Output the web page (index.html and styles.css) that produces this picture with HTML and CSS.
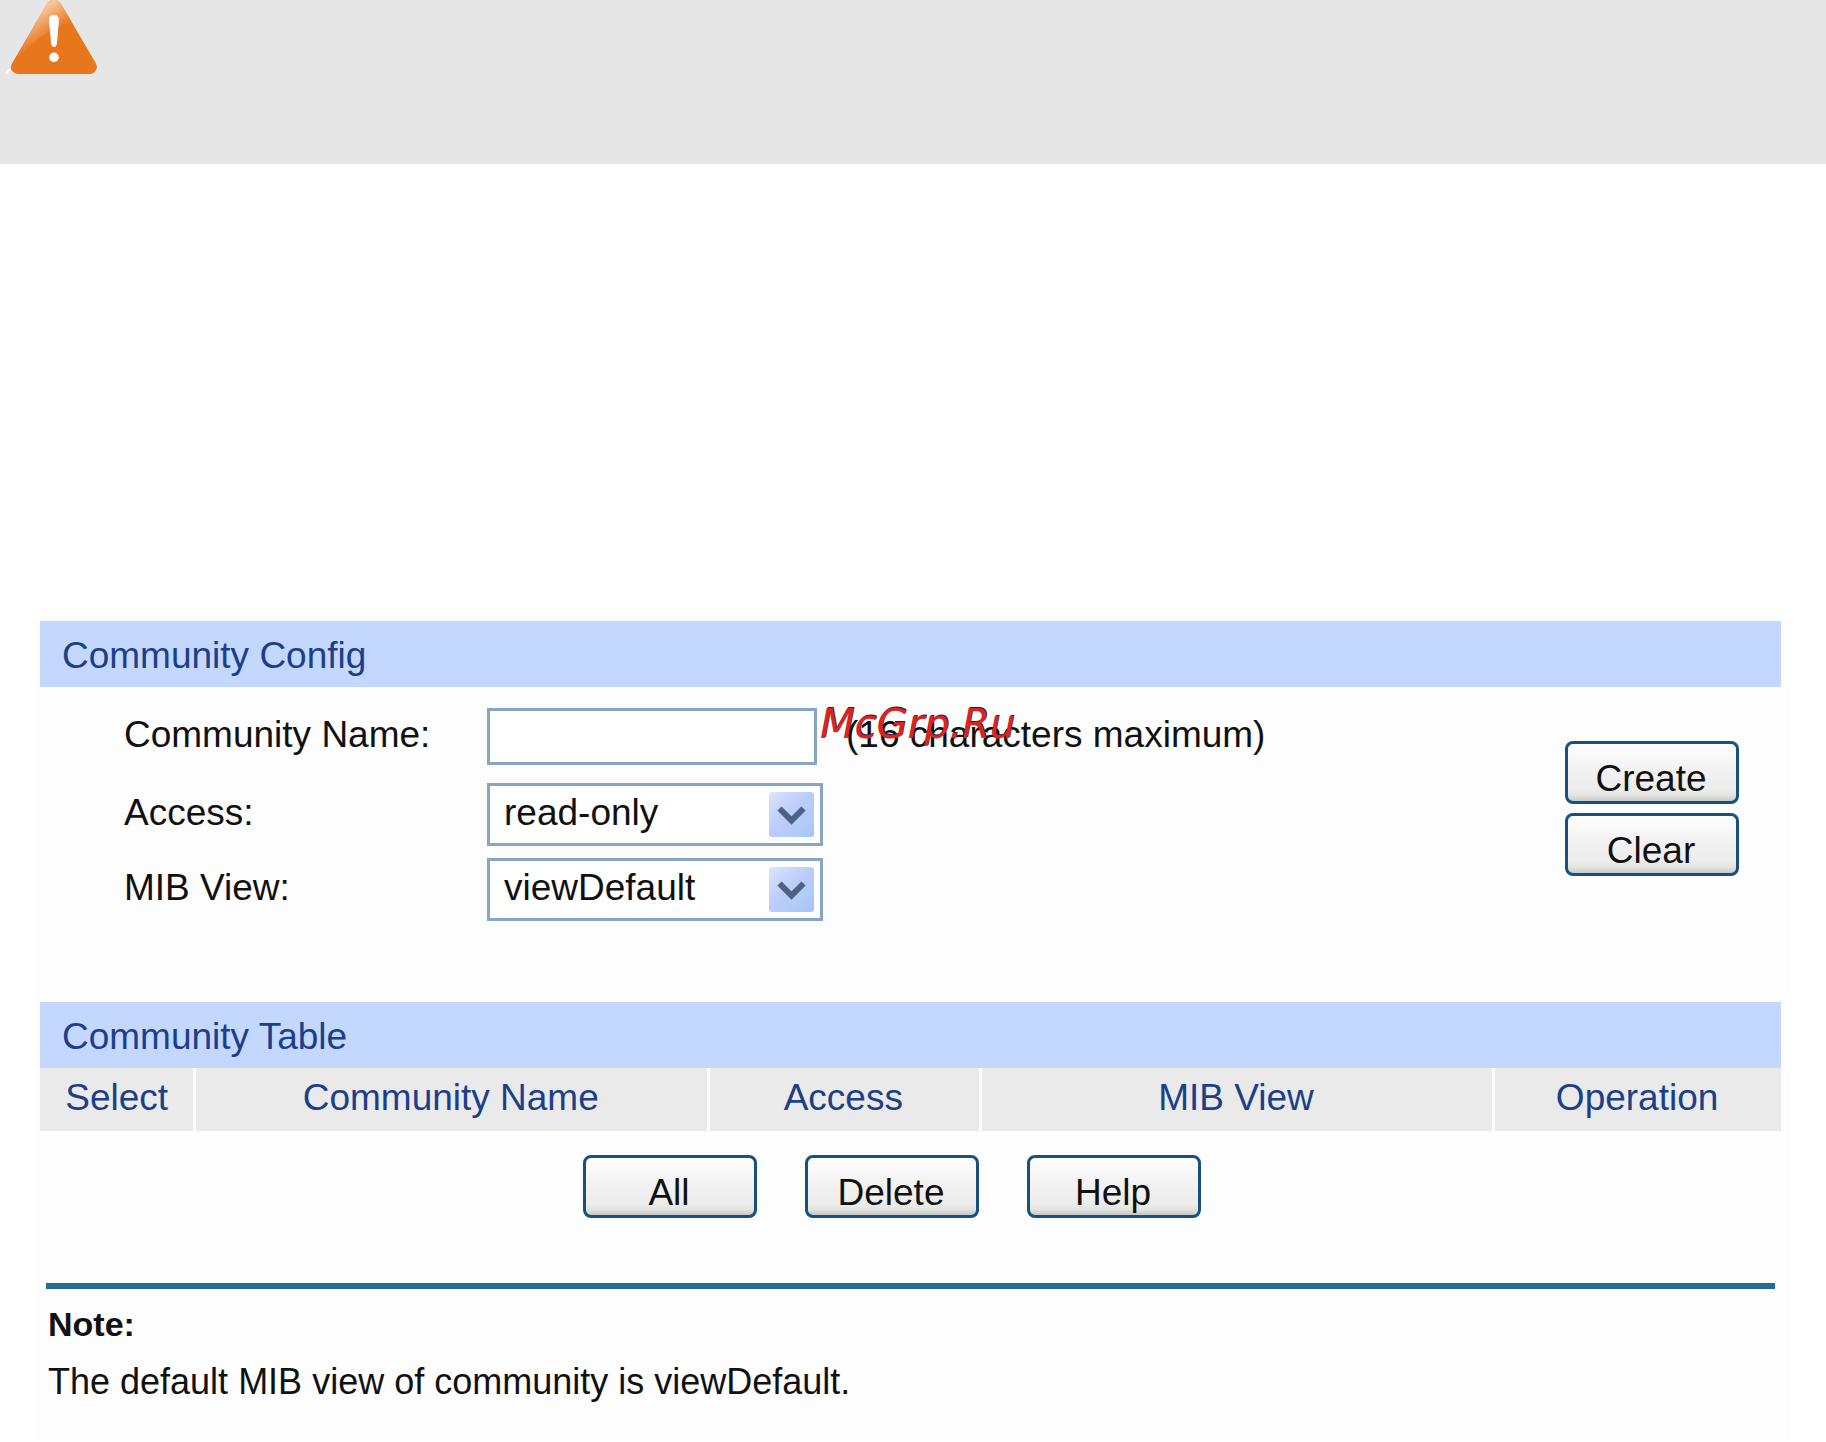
FILE: index.html
```html
<!DOCTYPE html>
<html lang="en">
<head>
<meta charset="utf-8">
<meta name="viewport" content="width=device-width, initial-scale=1">
<title>Community Config</title>
<link rel="stylesheet" href="styles.css">
</head>
<body>
<header class="banner">
  <svg class="warning-icon" width="98" height="76" viewBox="0 0 98 76" role="img" aria-label="Warning">
    <defs>
      <linearGradient id="gloss" gradientUnits="userSpaceOnUse" x1="30" y1="6" x2="50" y2="36">
        <stop offset="0" stop-color="#f8d5b3"/>
        <stop offset="0.25" stop-color="#f5c79b"/>
        <stop offset="1" stop-color="#e8771b"/>
      </linearGradient>
    </defs>
    <path d="M6 74L10 69" stroke="#fff" stroke-width="2"/>
    <path d="M47.500 3Q54 -4 60.500 3L96 63.500Q99 71 91 74H17Q9 71 11.500 64.500Z" fill="#e8771b"/>
    <path d="M47.500 3Q54 -4 60.500 3L71 21Q55 27 40 38Q27 47 12 64Z" fill="url(#gloss)"/>
    <path d="M49 20Q49 15 54 15Q59 15 59 20L57 43Q56.500 47 54 47Q51.500 47 51 43Z" fill="#fff"/>
    <circle cx="54" cy="57.300" r="4.800" fill="#fff"/>
  </svg>
</header>

<main class="panel">
  <section>
    <h2 class="section-title">Community Config</h2>
    <form class="config">
      <div class="fields">
        <div class="field field-name">
          <label for="name">Community Name:</label>
          <input class="text-input" id="name" type="text" maxlength="16">
          <span class="hint">(16 characters maximum)<span class="watermark">McGrp.Ru</span></span>
        </div>
        <div class="field">
          <label for="access">Access:</label>
          <span class="dropdown">
            <select id="access"><option>read-only</option><option>read-write</option></select>
            <svg class="arrow" viewBox="0 0 45 45" aria-hidden="true">
              <defs><linearGradient id="face" x1="0" y1="0" x2="1" y2="1"><stop offset="0" stop-color="#dce5fe"/><stop offset="0.45" stop-color="#bccdf9"/><stop offset="0.8" stop-color="#afcbfa"/><stop offset="1" stop-color="#a9c1f3"/></linearGradient></defs>
              <rect width="45" height="45" rx="3" fill="url(#face)"/>
              <path d="M10.500 16.500L22.500 28.500L34.500 16.500" fill="none" stroke="#4d6185" stroke-width="6"/>
            </svg>
          </span>
        </div>
        <div class="field">
          <label for="view">MIB View:</label>
          <span class="dropdown">
            <select id="view"><option>viewDefault</option></select>
            <svg class="arrow" viewBox="0 0 45 45" aria-hidden="true">
              <rect width="45" height="45" rx="3" fill="url(#face)"/>
              <path d="M10.500 16.500L22.500 28.500L34.500 16.500" fill="none" stroke="#4d6185" stroke-width="6"/>
            </svg>
          </span>
        </div>
      </div>
      <div class="form-buttons">
        <button class="btn" type="button">Create</button>
        <button class="btn" type="reset">Clear</button>
      </div>
    </form>
  </section>

  <section>
    <h2 class="section-title">Community Table</h2>
    <table class="community-table">
      <thead>
        <tr>
          <th class="col-select" scope="col">Select</th>
          <th class="col-name" scope="col">Community Name</th>
          <th class="col-access" scope="col">Access</th>
          <th class="col-view" scope="col">MIB View</th>
          <th scope="col">Operation</th>
        </tr>
      </thead>
    </table>
    <div class="table-buttons">
      <button class="btn" type="button">All</button>
      <button class="btn" type="button">Delete</button>
      <button class="btn" type="button">Help</button>
    </div>
  </section>

  <footer class="note">
    <h3>Note:</h3>
    <p>The default MIB view of community is viewDefault.</p>
  </footer>
</main>
</body>
</html>
```

FILE: styles.css
```css
* {
  box-sizing: border-box;
}

body {
  margin: 0;
  background: #fff;
  color: #111;
  font-family: "Liberation Sans", Arial, sans-serif;
  font-size: 37px;
  line-height: 42px;
}

h2,
h3,
p {
  margin: 0;
}

.banner {
  height: 164px;
  background: #e6e6e6;
}

.warning-icon {
  display: block;
}

.panel {
  margin: 457px 36px 0;
  padding: 0 9px 29px 4px;
  background: #fdfdfd;
}

.section-title {
  padding: 14px 22px 10px;
  background: #c4d7ff;
  color: #1c3f88;
  font-size: 37px;
  font-weight: 400;
}

/* Config form */
.config {
  display: flex;
  justify-content: space-between;
  padding: 21px 42px 81px 84px;
}

.fields {
  display: flex;
  flex-direction: column;
  gap: 12px;
}

.field {
  display: flex;
  align-items: center;
  white-space: nowrap;
}

.field-name {
  padding-bottom: 6px;
}

.field label {
  width: 363px;
  padding-bottom: 4px;
}

.text-input,
.dropdown select {
  margin: 0;
  border: 3px solid #88a6c4;
  border-radius: 0;
  background: #fff;
  color: #111;
  font: inherit;
}

.text-input {
  width: 330px;
  height: 57px;
  padding: 0 14px;
}

.dropdown {
  position: relative;
  display: flex;
}

.dropdown select {
  width: 336px;
  height: 63px;
  padding: 0 60px 3px 14px;
  appearance: none;
}

.arrow {
  position: absolute;
  top: 9px;
  right: 9px;
  width: 45px;
  height: 45px;
  pointer-events: none;
}

.hint {
  position: relative;
  margin-left: 29px;
  padding-bottom: 4px;
}

.watermark {
  position: absolute;
  top: -11px;
  left: -26px;
  color: #dd2222;
  font-family: "DejaVu Sans", Verdana, sans-serif;
  font-size: 40px;
  font-style: italic;
  text-shadow: 1px -1px 0 #2a2030;
}

/* Buttons */
.form-buttons {
  display: flex;
  flex-direction: column;
  gap: 9px;
  padding-top: 33px;
}

.btn {
  width: 174px;
  height: 63px;
  padding: 12px 2px 0 0;
  border: 3px solid #18507f;
  border-radius: 8px;
  background: linear-gradient(#fff, #f3f3f3 40%, #ececec 80%, #e4e4e0 90%, #c8c8c8);
  color: #111;
  font: inherit;
}

.table-buttons {
  display: flex;
  justify-content: center;
  gap: 48px;
  padding: 24px 37px 65px 0;
}

/* Table */
.community-table {
  width: 100%;
  border-collapse: collapse;
  table-layout: fixed;
}

.community-table th {
  height: 63px;
  padding: 0 2px 3px 0;
  border-right: 3px solid #fdfdfd;
  background: #eaeaea;
  background-clip: padding-box;
  color: #1c3f88;
  font-weight: 400;
}

.community-table th:last-child {
  border-right: 0;
}

.community-table .col-select {
  width: 8.9%;
  padding-right: 0;
}

.col-name,
.col-view {
  width: 29.5%;
}

.col-access {
  width: 15.6%;
}

/* Note */
.note {
  margin: 0 6px;
  padding: 7px 2px 0;
  border-top: 6px solid #266a96;
  font-size: 36px;
  line-height: 57px;
}

.note h3 {
  font-size: 34px;
}
```
